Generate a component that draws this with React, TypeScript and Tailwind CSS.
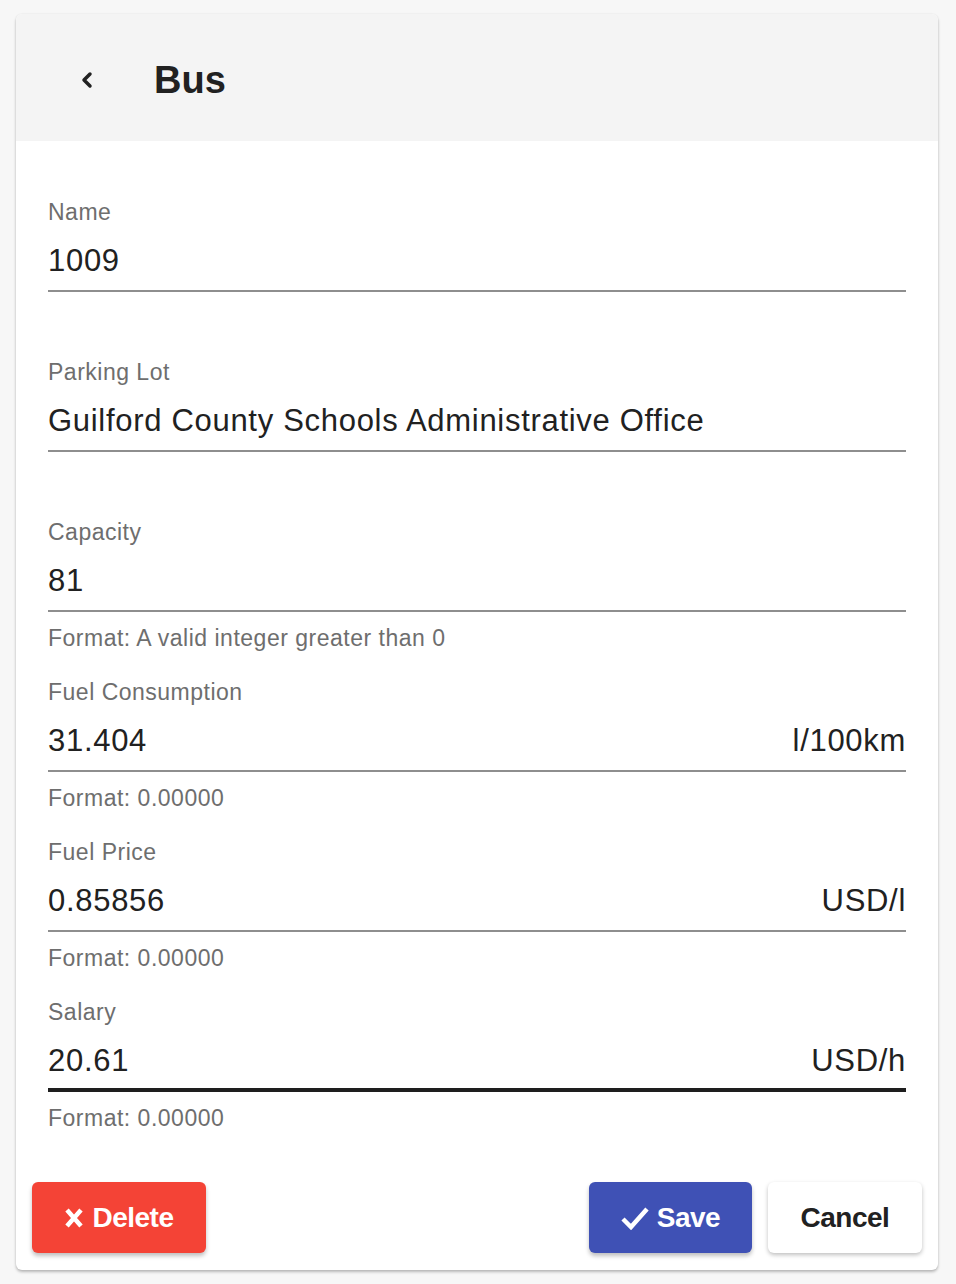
import { ChevronLeft } from "lucide-react"

type Field = {
    label: string
    value: string
    unit?: string
    helper?: string
    focused?: boolean
}

const fields: Field[] = [
    { label: "Name", value: "1009" },
    { label: "Parking Lot", value: "Guilford County Schools Administrative Office" },
    { label: "Capacity", value: "81", helper: "Format: A valid integer greater than 0" },
    { label: "Fuel Consumption", value: "31.404", unit: "l/100km", helper: "Format: 0.00000" },
    { label: "Fuel Price", value: "0.85856", unit: "USD/l", helper: "Format: 0.00000" },
    { label: "Salary", value: "20.61", unit: "USD/h", helper: "Format: 0.00000", focused: true },
]

function FormField({ field }: { field: Field }) {
    return (
        <div className="h-[160px]">
            <div className="h-[30px] text-[23px] leading-[30px] tracking-[0.5px] text-[#6e6e6e]">{field.label}</div>
            <div
                className={`flex items-center justify-between pt-[16px] text-[31px] leading-[36px] tracking-[0.7px] text-[#212121] ${
                    field.focused ? "pb-[9px] border-b-4 border-[#1e1e1e]" : "pb-[11px] border-b-2 border-[#8e8e8e]"
                }`}
            >
                <span>{field.value}</span>
                {field.unit && <span>{field.unit}</span>}
            </div>
            {field.helper && (
                <div className="mt-[11px] h-[30px] text-[23px] leading-[30px] tracking-[0.5px] text-[#6e6e6e]">
                    {field.helper}
                </div>
            )}
        </div>
    )
}

export default function App() {
    return (
        <div
            className="min-h-[1284px] bg-[#f7f7f7] px-4 pt-[14px]"
            style={{ fontFamily: '"Liberation Sans", Arial, sans-serif' }}
        >
            <div className="w-[922px] overflow-hidden rounded-md bg-white shadow-[0_2px_3px_rgba(0,0,0,0.25),0_0_2px_rgba(0,0,0,0.08)]">
                {/* Header */}
                <div className="flex h-[127px] items-center bg-[#f4f4f4] pt-[4px]">
                    <button className="ml-[59px] flex h-[24px] w-[24px] items-center justify-center text-[#212121]">
                        <ChevronLeft size={26} strokeWidth={3.5} />
                    </button>
                    <h1 className="ml-[55px] text-[38px] font-bold leading-none text-[#212121]">Bus</h1>
                </div>

                {/* Form */}
                <div className="px-8 pt-[56px]">
                    {fields.map((f) => (
                        <FormField key={f.label} field={f} />
                    ))}
                </div>

                {/* Actions */}
                <div className="flex items-center justify-between px-4 pt-[25px] pb-[17px]">
                    <button className="flex h-[71px] w-[174px] items-center justify-center gap-[8px] rounded-md bg-[#f44336] text-[28px] font-semibold tracking-[-0.5px] text-white shadow-[0_3px_4px_rgba(0,0,0,0.25)]">
                        <svg width="20" height="22" viewBox="0 0 20 22" fill="none">
                            <path d="M3 3L17 19M17 3L3 19" stroke="white" strokeWidth="4.5" strokeLinecap="butt" />
                        </svg>
                        Delete
                    </button>
                    <div className="flex gap-4">
                        <button className="flex h-[71px] w-[163px] items-center justify-center gap-[8px] rounded-md bg-[#3f51b5] text-[28px] font-semibold tracking-[-0.5px] text-white shadow-[0_3px_4px_rgba(0,0,0,0.25)]">
                            <svg width="28" height="24" viewBox="0 0 28 24" fill="none">
                                <path d="M2 13L10 21L26 3" stroke="white" strokeWidth="4.5" />
                            </svg>
                            Save
                        </button>
                        <button className="flex h-[71px] w-[154px] items-center justify-center rounded-md bg-white text-[28px] font-semibold tracking-[-0.5px] text-[#212121] shadow-[0_2px_4px_rgba(0,0,0,0.25)]">
                            Cancel
                        </button>
                    </div>
                </div>
            </div>
        </div>
    )
}
